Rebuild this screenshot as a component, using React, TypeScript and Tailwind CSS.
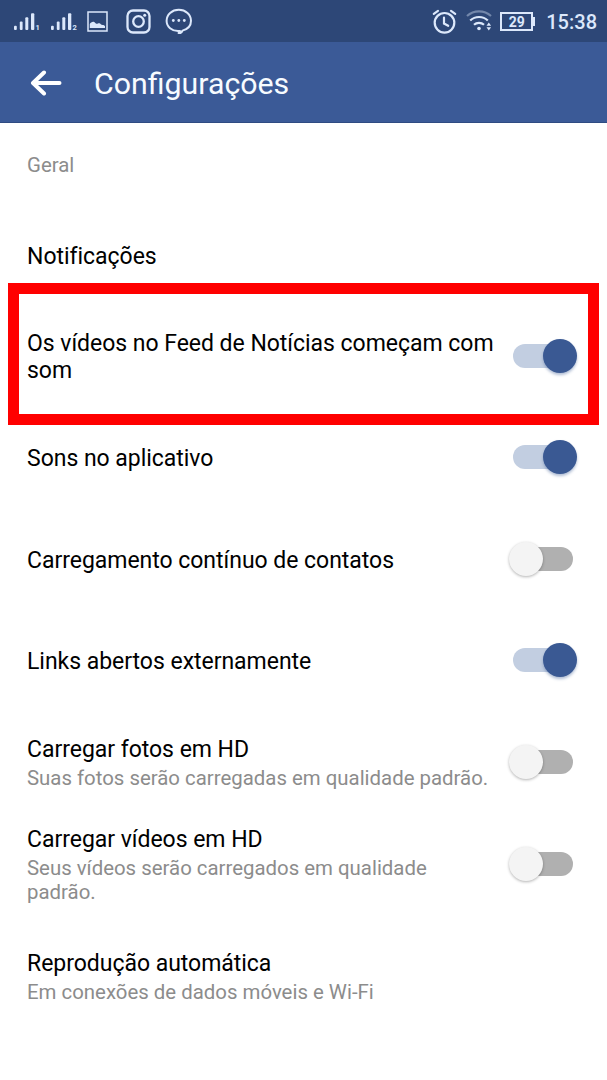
import * as React from 'react'

type Setting = {
  id: string
  title: string
  description?: string
  enabled?: boolean
  highlighted?: boolean
  height: string
}

const settings: Setting[] = [
  { id: 'notifications', title: 'Notificações', height: 'h-[101px]' },
  { id: 'feed-sound', title: 'Os vídeos no Feed de Notícias começam com som', enabled: true, highlighted: true, height: 'h-[101px]' },
  { id: 'app-sounds', title: 'Sons no aplicativo', enabled: true, height: 'h-[101px]' },
  { id: 'contacts', title: 'Carregamento contínuo de contatos', enabled: false, height: 'h-[102px]' },
  { id: 'links', title: 'Links abertos externamente', enabled: true, height: 'h-[101px]' },
  { id: 'hd-photos', title: 'Carregar fotos em HD', description: 'Suas fotos serão carregadas em qualidade padrão.', enabled: false, height: 'h-[101px]' },
  { id: 'hd-videos', title: 'Carregar vídeos em HD', description: 'Seus vídeos serão carregados em qualidade padrão.', enabled: false, height: 'h-[103px]' },
  { id: 'autoplay', title: 'Reprodução automática', description: 'Em conexões de dados móveis e Wi-Fi', height: 'h-[121px]' },
]

function Signal({ sim }: { sim: string }) {
  return (
    <svg className="w-7 h-5" viewBox="0 0 28 20" fill="#dce8fb">
      <rect x="0" y="14.7" width="2.8" height="4.3" rx="1" />
      <rect x="5.8" y="10.5" width="2.8" height="8.5" rx="1" />
      <rect x="11.3" y="6.3" width="3" height="12.7" rx="1" />
      <rect x="17" y="2.3" width="3.3" height="16.7" rx="1" />
      <text x="21.5" y="18.7" fontSize="7.5" fontWeight="700" fontFamily="Roboto, sans-serif">{sim}</text>
    </svg>
  )
}

function StatusBar() {
  return (
    <div className="h-[42px] bg-[#2d4777] flex items-center justify-between pl-3.5 pr-2.5 text-[#dce8fb]">
      <div className="flex items-center">
        <Signal sim="1" />
        <div className="ml-[9px]"><Signal sim="2" /></div>
        <svg className="ml-2 w-[21px] h-[21px]" viewBox="0 0 21 21" fill="none">
          <rect x="1" y="1" width="19" height="19" stroke="currentColor" strokeWidth="1.5" />
          <path d="M2.8 17v-4c1-1.8 2.8-2.8 4.4-2 1 .5 1.3 1.6 2.3 1.8 1.2.2 1.6-.9 3-.5 1 .3 1.1 1.2 2.2 1.4 1.3.2 2.4.2 3.3 1.3v2z" fill="currentColor" />
        </svg>
        <svg className="ml-[18px] w-[25px] h-[25px]" viewBox="0 0 25 25" fill="none" stroke="currentColor" strokeWidth="2.3">
          <rect x="1.5" y="1.5" width="22" height="22" rx="5.5" />
          <circle cx="12.5" cy="12.5" r="5.3" />
          <circle cx="18.7" cy="6.2" r="1.5" fill="currentColor" stroke="none" />
        </svg>
        <svg className="ml-[14px] w-7 h-7" viewBox="0 0 28 28" fill="none">
          <path d="M17.5 23.6c5-1.3 8.5-5 8.5-9.8C26 7.6 20.7 2.7 13.8 2.7S1.6 7.6 1.6 13.8 7 24 13 24l2 .1c-.2.9-.8 1.4-1.5 1.9 2.2.2 3.5-.8 4-2.4z" stroke="currentColor" strokeWidth="2" strokeLinejoin="round" />
          <circle cx="8.3" cy="13.5" r="1.4" fill="currentColor" />
          <circle cx="13.8" cy="13.5" r="1.4" fill="currentColor" />
          <circle cx="19.3" cy="13.5" r="1.4" fill="currentColor" />
        </svg>
      </div>
      <div className="flex items-center">
        <svg className="w-[25px] h-[25px]" viewBox="0 0 25 25" fill="none" stroke="currentColor" strokeWidth="2.2" strokeLinecap="round">
          <circle cx="12.5" cy="13.8" r="9.8" />
          <path d="M12 8.5v6l4.2 2.3M1.8 4.8 6 1.8M23.2 4.8 19 1.8" />
        </svg>
        <svg className="ml-[9px] w-[26px] h-6" viewBox="0 0 26 24" fill="none" stroke="currentColor" strokeWidth="2.2">
          <path d="M1 7c6.8-6.2 17.2-6.2 24 0" opacity=".4" />
          <path d="M4.2 11.5c5-4.7 12.8-4.7 17.6 0" />
          <path d="M8 15.8c2.8-2.7 7.2-2.7 10 0" />
          <circle cx="13" cy="19.5" r="1.8" fill="currentColor" stroke="none" />
          <path d="m20.5 16.8 2.3-3.2 2.3 3.2zM20.5 18.3l2.3 3.2 2.3-3.2z" fill="currentColor" stroke="none" />
        </svg>
        <div className="ml-2 w-[33px] h-[19px] border-2 border-[#dce8fb] flex items-center justify-center font-bold text-[14px] leading-none pt-px">29</div>
        <div className="w-[2px] h-[9px] bg-[#dce8fb]" />
        <div className="ml-[11px] pt-0.5 text-[20px] leading-6 font-medium">15:38</div>
      </div>
    </div>
  )
}

function Toggle({ enabled }: { enabled: boolean }) {
  return enabled ? (
    <div className="mr-[34px] mb-0.5 w-[60px] h-6 rounded-full bg-[#c2cee1] flex items-center justify-end">
      <div className="-mr-1 w-[34px] h-[34px] shrink-0 rounded-full bg-[#3a5993] shadow-[0_2px_3px_rgba(58,89,147,0.4)]" />
    </div>
  ) : (
    <div className="mr-[34px] w-[61px] h-6 rounded-full bg-[#b0b0b0] flex items-center">
      <div className="-ml-[3px] w-[34px] h-[34px] shrink-0 rounded-full bg-[#f4f4f4] shadow-[0_1px_3px_rgba(0,0,0,0.3)]" />
    </div>
  )
}

export default function App() {
  return (
    <div className="w-[607px] h-[1080px] overflow-hidden bg-white font-[Roboto,sans-serif]">
      <StatusBar />
      <header className="h-[81px] bg-[#3b5a97] border-b border-[#2f4b82] flex items-center text-[#f7fbff]">
        <button className="ml-[30px] mt-0.5 w-8 h-[26px]">
          <svg className="w-8 h-[26px]" viewBox="0 0 32 26" fill="none" stroke="white" strokeWidth="4" strokeLinecap="round" strokeLinejoin="round">
            <path d="M14 2.5 3 13l11 10.5M4 13h25.5" />
          </svg>
        </button>
        <h1 className="ml-8 pt-1 text-[30.3px] leading-9">Configurações</h1>
      </header>

      <main>
        <h2 className="h-[82px] pt-[29px] pl-[27px] text-[20.4px] leading-[26px] text-[#8c8c8c]">Geral</h2>
        {settings.map((item) => (
          <div key={item.id} className={`relative flex items-center justify-between pl-[27px] ${item.height}`}>
            {item.highlighted && (
              <div className="absolute -top-[23px] left-2 w-[591px] h-[142px] border-[11px] border-[#ff0000]" />
            )}
            <div className={item.highlighted ? 'w-[471px]' : 'w-[471px] pt-0.5'}>
              <div className="text-[23px] leading-[27px] tracking-[-0.03px] text-black">{item.title}</div>
              {item.description && <div className="mt-[3px] text-[20.4px] leading-6 text-[#8c8c8c]">{item.description}</div>}
            </div>
            {item.enabled !== undefined && <Toggle enabled={item.enabled} />}
          </div>
        ))}
      </main>
    </div>
  )
}
